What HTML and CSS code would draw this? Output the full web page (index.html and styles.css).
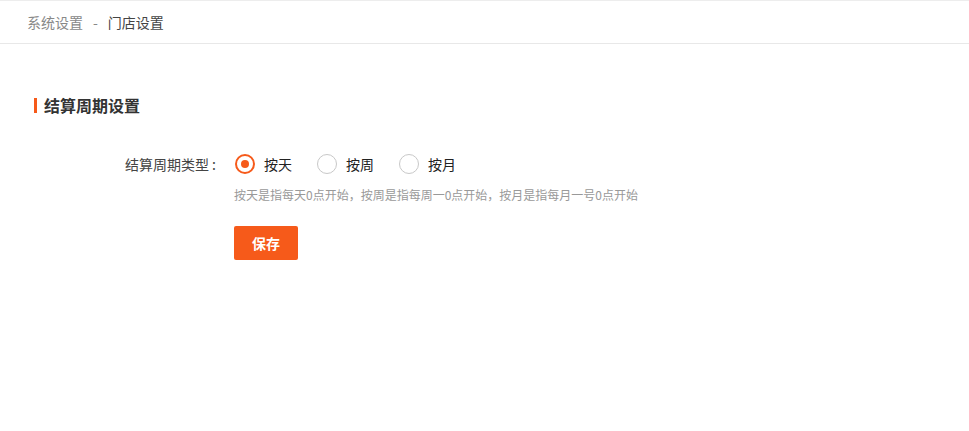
FILE: index.html
```html
<!DOCTYPE html>
<html lang="zh-CN">
<head>
    <meta charset="UTF-8">
    <title>门店设置</title>
    <link rel="stylesheet" href="styles.css">
</head>
<body>
    <div class="breadcrumb">
        <span class="crumb">系统设置</span>
        <span class="sep">-</span>
        <span class="crumb current">门店设置</span>
    </div>

    <div class="content">
        <h2 class="section-title">结算周期设置</h2>

        <div class="form-row">
            <label class="form-label">结算周期类型<span class="colon">:</span></label>
            <div class="form-field">
                <div class="radio-group">
                    <label class="radio checked"><span class="radio-dot"></span>按天</label>
                    <label class="radio"><span class="radio-dot"></span>按周</label>
                    <label class="radio"><span class="radio-dot"></span>按月</label>
                </div>
                <p class="hint">按天是指每天0点开始，按周是指每周一0点开始，按月是指每月一号0点开始</p>
            </div>
        </div>

        <div class="form-row">
            <div class="form-label"></div>
            <div class="form-field">
                <button class="btn-primary">保存</button>
            </div>
        </div>
    </div>
</body>
</html>
```

FILE: styles.css
```css
body {
    margin: 0;
    font-family: "Noto Sans CJK SC", "Liberation Sans", sans-serif;
    background-color: #fff;
    color: #333;
}
.breadcrumb {
    height: 42px;
    border-top: 1px solid #ededed;
    border-bottom: 1px solid #e8e8e8;
    display: flex;
    align-items: center;
    padding-left: 27px;
    font-size: 14px;
    color: #888;
}
.sep {
    margin: 0 10px;
}
.crumb.current {
    color: #444;
}
.content {
    padding: 50px 34px;
}
.section-title {
    margin: 0 0 37px;
    font-size: 16px;
    font-weight: bold;
    color: #333;
    line-height: 22px;
    display: flex;
    align-items: center;
}
.section-title::before {
    content: "";
    width: 3px;
    height: 15px;
    background-color: #f65a1a;
    margin-right: 7px;
}
.form-row {
    display: flex;
    margin-bottom: 22px;
}
.form-label {
    width: 200px;
    text-align: right;
    font-size: 14px;
    color: #444;
    line-height: 22px;
    padding-right: 18px;
    box-sizing: border-box;
}
.colon {
    margin-left: 3px;
}
.radio-group {
    display: flex;
    gap: 25px;
    height: 22px;
    align-items: center;
    padding-left: 1px;
}
.radio {
    display: flex;
    align-items: center;
    font-size: 14px;
    color: #222;
    cursor: pointer;
}
.radio-dot {
    width: 18px;
    height: 18px;
    border: 1px solid #c8c8c8;
    border-radius: 50%;
    margin-right: 9px;
    display: flex;
    align-items: center;
    justify-content: center;
}
.radio.checked .radio-dot {
    border: 2px solid #f65a1a;
    width: 16px;
    height: 16px;
}
.radio.checked .radio-dot::after {
    content: "";
    width: 8px;
    height: 8px;
    border-radius: 50%;
    background-color: #f65a1a;
}
.hint {
    margin: 11px 0 0;
    font-size: 12px;
    color: #999;
    line-height: 18px;
}
.btn-primary {
    width: 64px;
    height: 34px;
    border: none;
    border-radius: 2px;
    background-color: #f65a1a;
    color: #fff;
    font-family: inherit;
    font-size: 14px;
    font-weight: bold;
    cursor: pointer;
}
```
